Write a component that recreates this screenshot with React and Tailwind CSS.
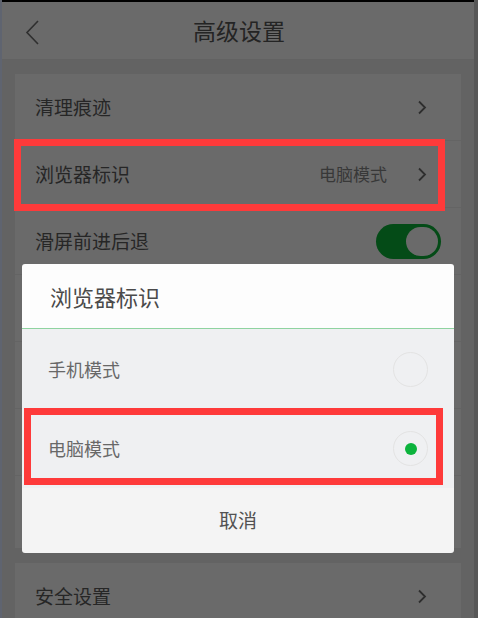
import React from 'react';

const font = { fontFamily: '"Noto Sans CJK SC", "Noto Sans", sans-serif' };

const Chevron = ({ className = '' }) => (
  <svg width="10" height="15" viewBox="0 0 10 15" className={className}>
    <path d="M2 1.5 L8 7.5 L2 13.5" fill="none" stroke="#2e2e2e" strokeWidth="1.8" />
  </svg>
);

const Row = ({ label, value, right, divider = true }) => (
  <div className={`h-[67px] shrink-0 flex items-center pl-[20px] pr-[34px] ${divider ? 'border-b border-[#646464]' : ''}`}>
    <span className="text-[19px] text-[#262626] flex-1">{label}</span>
    {value && <span className="text-[17px] text-[#383838] mr-[30px]">{value}</span>}
    {right}
  </div>
);

const Toggle = () => (
  <div className="w-[65px] h-[35px] rounded-full bg-[#044b17] flex items-center justify-end pr-[3px] -mr-[14px]">
    <div className="w-[32px] h-[29px] rounded-full bg-[#6a6a6a]" />
  </div>
);

const Radio = ({ checked }) => (
  <div className="w-[35px] h-[35px] rounded-full border-[1.5px] border-[#e3e3e3] flex items-center justify-center">
    {checked && <div className="w-[12px] h-[12px] rounded-full bg-[#0bb33c]" />}
  </div>
);

export default function App() {
  return (
    <div className="w-[478px] h-[618px] relative overflow-hidden bg-[#5a5a5a] flex" style={font}>
      {/* left edge sliver */}
      <div className="w-[2px] bg-[#5f6470]" />
      <div className="w-[472px] flex flex-col bg-[#636363] overflow-hidden">
        <div className="h-[2px] shrink-0 bg-black" />
        <div className="h-[58px] shrink-0 bg-[#6a6a6a] border-b border-[#626262] flex items-center relative">
          <svg width="16" height="26" viewBox="0 0 16 26" className="absolute left-[23px] top-[18px]">
            <path d="M13 1 L2 12.5 L13 24" fill="none" stroke="#2f2f2f" strokeWidth="1.6" />
          </svg>
          <span className="flex-1 text-center text-[23px] text-[#242424] pl-[2px]">高级设置</span>
        </div>
        <div className="mt-[14px] mx-[13px] shrink-0 bg-[#6a6a6a] h-[474px] flex flex-col overflow-hidden">
          <Row label="清理痕迹" right={<Chevron />} />
          <Row label="浏览器标识" value="电脑模式" right={<Chevron />} />
          <Row label="滑屏前进后退" right={<Toggle />} />
          <Row label="" />
          <Row label="" />
          <Row label="" />
        </div>
        <div className="mt-[15px] mx-[13px] shrink-0 bg-[#6a6a6a] h-[67px]">
          <Row label="安全设置" right={<Chevron />} divider={false} />
        </div>
      </div>
      <div className="w-[4px] bg-[#575757]" />

      {/* annotation: highlight on list row */}
      <div className="absolute left-[14px] top-[139px] w-[431px] h-[72px] border-[7px] border-[#fe3a3a]" />

      {/* dialog */}
      <div className="absolute left-[22px] top-[264px] w-[432px] h-[289px] rounded-[3px] overflow-hidden flex flex-col">
        <div className="h-[65px] shrink-0 bg-[#fdfdfd] flex items-center pl-[28px] border-b border-[#8fd3a0]">
          <span className="text-[22px] text-[#4a4a4a]">浏览器标识</span>
        </div>
        <div className="bg-[#eff0f2] shrink-0">
          <div className="h-[80px] flex items-center justify-between pl-[26px] pr-[26px]">
            <span className="text-[18px] text-[#686868]">手机模式</span>
            <Radio />
          </div>
          <div className="h-[79px] flex items-center justify-between pl-[26px] pr-[26px]">
            <span className="text-[18px] text-[#686868]">电脑模式</span>
            <Radio checked />
          </div>
        </div>
        <div className="flex-1 bg-[#f4f4f4] flex items-center justify-center">
          <span className="text-[19px] text-[#525252]">取消</span>
        </div>
      </div>

      {/* annotation: highlight on dialog option */}
      <div className="absolute left-[24px] top-[408px] w-[419px] h-[77px] border-[7px] border-[#fe3a3a]" />
    </div>
  );
}
